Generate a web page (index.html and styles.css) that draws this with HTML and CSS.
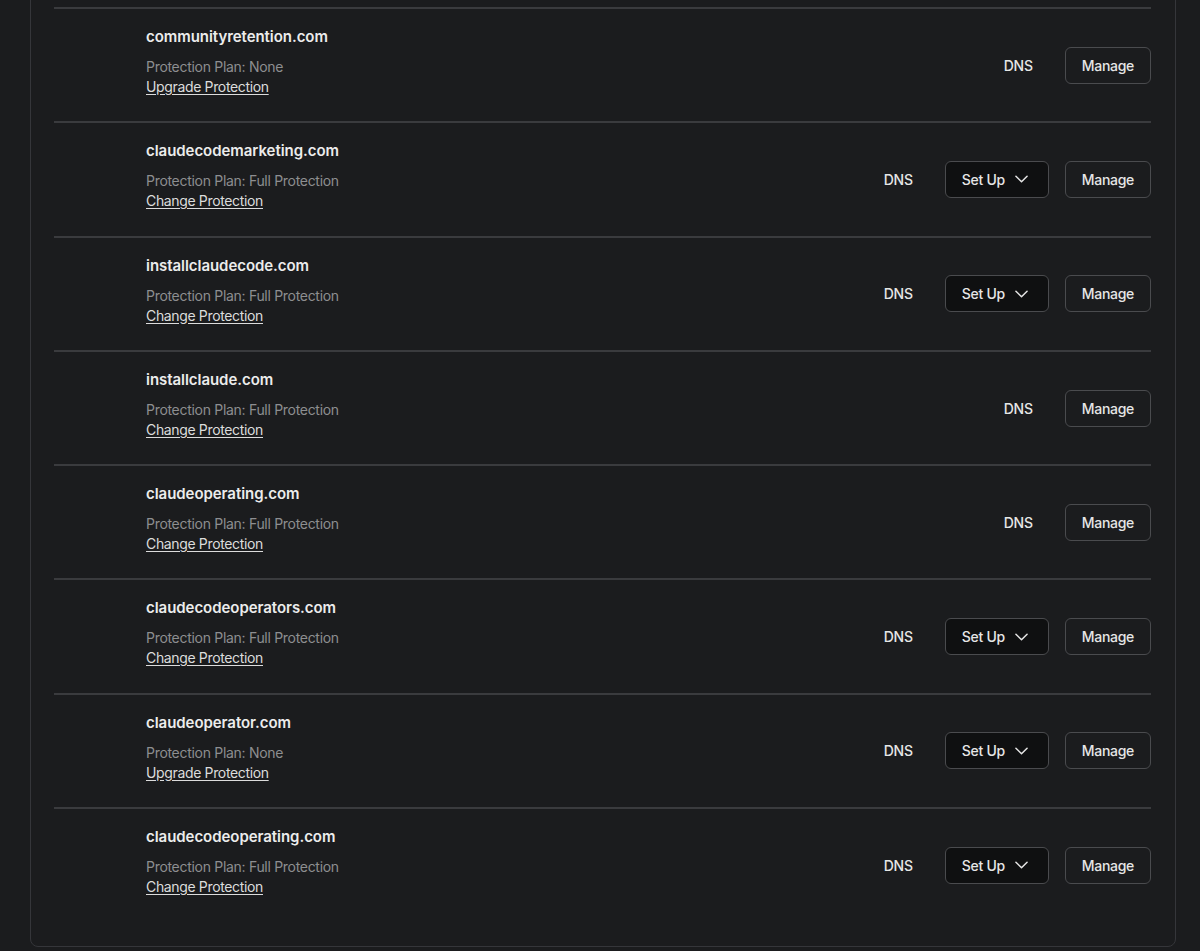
FILE: index.html
```html
<!DOCTYPE html>
<html lang="en">
<head>
<meta charset="utf-8">
<title>Domains</title>
<link rel="stylesheet" href="styles.css">
</head>
<body>
<div class="page">
  <section class="card">
    <div class="row">
      <div class="info">
        <div class="name">communityretention.com</div>
        <div class="plan">Protection Plan: None</div>
        <a class="link" href="#">Upgrade Protection</a>
      </div>
      <div class="actions">
        <span class="dns">DNS</span>
        <button class="btn">Manage</button>
      </div>
    </div>
    <div class="row">
      <div class="info">
        <div class="name">claudecodemarketing.com</div>
        <div class="plan">Protection Plan: Full Protection</div>
        <a class="link" href="#">Change Protection</a>
      </div>
      <div class="actions">
        <span class="dns">DNS</span>
        <button class="btn btn-dark">Set Up <svg class="chev" viewBox="0 0 14 8" width="13" height="8"><path d="M1 1l6 6 6-6" fill="none" stroke="currentColor" stroke-width="1.6" stroke-linecap="round" stroke-linejoin="round"/></svg></button>
        <button class="btn">Manage</button>
      </div>
    </div>
    <div class="row">
      <div class="info">
        <div class="name">installclaudecode.com</div>
        <div class="plan">Protection Plan: Full Protection</div>
        <a class="link" href="#">Change Protection</a>
      </div>
      <div class="actions">
        <span class="dns">DNS</span>
        <button class="btn btn-dark">Set Up <svg class="chev" viewBox="0 0 14 8" width="13" height="8"><path d="M1 1l6 6 6-6" fill="none" stroke="currentColor" stroke-width="1.6" stroke-linecap="round" stroke-linejoin="round"/></svg></button>
        <button class="btn">Manage</button>
      </div>
    </div>
    <div class="row">
      <div class="info">
        <div class="name">installclaude.com</div>
        <div class="plan">Protection Plan: Full Protection</div>
        <a class="link" href="#">Change Protection</a>
      </div>
      <div class="actions">
        <span class="dns">DNS</span>
        <button class="btn">Manage</button>
      </div>
    </div>
    <div class="row">
      <div class="info">
        <div class="name">claudeoperating.com</div>
        <div class="plan">Protection Plan: Full Protection</div>
        <a class="link" href="#">Change Protection</a>
      </div>
      <div class="actions">
        <span class="dns">DNS</span>
        <button class="btn">Manage</button>
      </div>
    </div>
    <div class="row">
      <div class="info">
        <div class="name">claudecodeoperators.com</div>
        <div class="plan">Protection Plan: Full Protection</div>
        <a class="link" href="#">Change Protection</a>
      </div>
      <div class="actions">
        <span class="dns">DNS</span>
        <button class="btn btn-dark">Set Up <svg class="chev" viewBox="0 0 14 8" width="13" height="8"><path d="M1 1l6 6 6-6" fill="none" stroke="currentColor" stroke-width="1.6" stroke-linecap="round" stroke-linejoin="round"/></svg></button>
        <button class="btn">Manage</button>
      </div>
    </div>
    <div class="row">
      <div class="info">
        <div class="name">claudeoperator.com</div>
        <div class="plan">Protection Plan: None</div>
        <a class="link" href="#">Upgrade Protection</a>
      </div>
      <div class="actions">
        <span class="dns">DNS</span>
        <button class="btn btn-dark">Set Up <svg class="chev" viewBox="0 0 14 8" width="13" height="8"><path d="M1 1l6 6 6-6" fill="none" stroke="currentColor" stroke-width="1.6" stroke-linecap="round" stroke-linejoin="round"/></svg></button>
        <button class="btn">Manage</button>
      </div>
    </div>
    <div class="row">
      <div class="info">
        <div class="name">claudecodeoperating.com</div>
        <div class="plan">Protection Plan: Full Protection</div>
        <a class="link" href="#">Change Protection</a>
      </div>
      <div class="actions">
        <span class="dns">DNS</span>
        <button class="btn btn-dark">Set Up <svg class="chev" viewBox="0 0 14 8" width="13" height="8"><path d="M1 1l6 6 6-6" fill="none" stroke="currentColor" stroke-width="1.6" stroke-linecap="round" stroke-linejoin="round"/></svg></button>
        <button class="btn">Manage</button>
      </div>
    </div>
  </section>
</div>
</body>
</html>
```
FILE: styles.css
```css
html, body {
  margin: 0;
  padding: 0;
  background: #1b1c1e;
  height: 951px;
  overflow: hidden;
}
body {
  font-family: Inter, "Noto Sans", "Liberation Sans", sans-serif;
  color: #e6e6e6;
}
.page {
  padding: 0 24px 4px 30px;
}
.card {
  margin-top: -21px;
  border: 1px solid #35363a;
  border-radius: 8px;
  background: #1b1c1e;
  padding: 27px 24px 25px 23px;
}
.row {
  display: flex;
  align-items: center;
  justify-content: space-between;
  border-top: 2px solid #3a3b3e;
}
.info {
  display: flex;
  flex-direction: column;
  align-items: flex-start;
  padding: 16px 0 24.3px 92px;
}
.name {
  font-size: 15px;
  font-weight: 600;
  line-height: 24px;
  color: #ececec;
  margin-bottom: 8px;
  letter-spacing: -0.05px;
}
.plan {
  font-size: 14px;
  line-height: 20px;
  color: #8d8e90;
  letter-spacing: -0.3px;
}
.link {
  font-size: 14px;
  line-height: 20px;
  color: #dcdcdc;
  letter-spacing: -0.35px;
  text-decoration: underline;
  text-underline-offset: 2px;
}
.actions {
  display: flex;
  align-items: center;
  gap: 16px;
}
.dns {
  font-size: 14px;
  font-weight: 500;
  color: #e6e6e6;
  margin-right: 16px;
  letter-spacing: -0.2px;
}
.btn {
  display: flex;
  align-items: center;
  gap: 10px;
  height: 37px;
  padding: 0 16px;
  border: 1px solid #4a4b4e;
  border-radius: 6px;
  background: transparent;
  color: #e6e6e6;
  font-family: inherit;
  font-size: 14px;
  font-weight: 500;
  letter-spacing: -0.3px;
}
.btn-dark {
  background: #0f1011;
  padding: 0 20px 0 16px;
}
.chev {
  display: block;
}
```
